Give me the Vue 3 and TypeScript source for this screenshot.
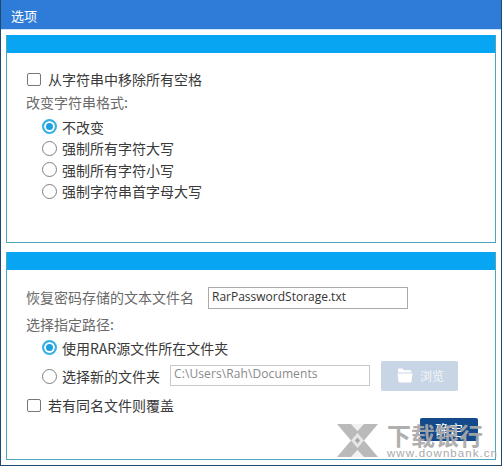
<script setup lang="ts">
const caseOptions: { label: string; on: boolean }[] = [
  { label: '不改变', on: true },
  { label: '强制所有字符大写', on: false },
  { label: '强制所有字符小写', on: false },
  { label: '强制字符串首字母大写', on: false },
]
</script>

<template>
  <div class="win">
    <div class="title">选项</div>
    <div class="body">
      <section class="panel one">
        <div class="bar"></div>
        <div class="content first">
          <div class="row check-row"><span class="check"></span><span class="txt">从字符串中移除所有空格</span></div>
          <div class="label fmt">改变字符串格式:</div>
          <div class="radios">
            <div v-for="o in caseOptions" :key="o.label" class="row radio-row">
              <span class="radio" :class="{ on: o.on }"></span><span class="txt">{{ o.label }}</span>
            </div>
          </div>
        </div>
      </section>
      <section class="panel two">
        <div class="bar"></div>
        <div class="content second">
          <div class="row file-row">
            <span class="label name">恢复密码存储的文本文件名</span>
            <div class="input file">RarPasswordStorage.txt</div>
          </div>
          <div class="label path">选择指定路径:</div>
          <div class="radios r2">
            <div class="row radio-row src"><span class="radio on"></span><span class="txt">使用RAR源文件所在文件夹</span></div>
            <div class="row radio-row new">
              <span class="radio low"></span><span class="txt newtxt">选择新的文件夹</span>
              <div class="input dir">C:\Users\Rah\Documents</div>
              <div class="browse">
                <svg width="16" height="15" viewBox="0 0 16 15"><path d="M1 1.500C1 .8 1.500.5 2 .5h3.500L7 2.200h6.500c.6 0 1 .4 1 1V4.500H1z" fill="#fff"/><path d="M.5 5.500h15l-1 8c-.1.6-.5 1-1.100 1H2.600c-.6 0-1-.4-1.100-1z" fill="#fff"/></svg>
                <span>浏览</span>
              </div>
            </div>
          </div>
          <div class="row check-row over"><span class="check"></span><span class="txt">若有同名文件则覆盖</span></div>
          <div class="actions"><div class="ok">确定</div></div>
        </div>
      </section>
    </div>
    <div class="mark">
      <svg width="41" height="33" viewBox="0 0 41 33">
        <path d="M0 0h41L27 16.500 41 33H0l14-16.500z" fill="#bababa"/>
        <path d="M14 0h13L20.500 7z M14 33h13L20.500 26z" fill="#f2f2f2"/>
        <path d="M20.500 9l6.500 7.500-6.500 7.500-6.500-7.500z" fill="#e6e6e6"/>
        <path d="M20.500 13.500l2.600 3-2.600 3-2.600-3z" fill="#a8a8a8"/>
      </svg>
      <div class="mark-text">
        <div class="mark-cn">下载银行</div>
        <div class="mark-url">www.downbank.cn</div>
      </div>
    </div>
  </div>
</template>

<style>
html, body { margin: 0; padding: 0; background: #fff; }
</style>

<style scoped>
.win {
  position: relative;
  width: 502px;
  height: 466px;
  box-sizing: border-box;
  border: 1px solid #1d4a6e;
  border-top: 0;
  background: #fff;
  overflow: hidden;
  font-family: "Noto Sans CJK SC", "Noto Sans", sans-serif;
  font-size: 14px;
  color: #3a3a3a;
}
.title {
  height: 29px;
  line-height: 31px;
  padding-left: 10px;
  background: #2f7cd8;
  color: #fff;
  font-size: 13px;
  border-bottom: 1px solid #cfe4f7;
}
.body {
  display: flex;
  flex-direction: column;
  gap: 9px;
  padding: 5px 5px 0;
}
.panel {
  box-sizing: border-box;
  height: 208px;
  border: 1px solid #4ea6bb;
  border-top: 0;
  background: #fff;
}
.bar { height: 18px; background: #08a5f3; }
.row { display: flex; align-items: center; }
.content { box-sizing: border-box; }
.first { padding: 16px 0 0 19px; }
.second { padding: 17px 0 0 19px; position: relative; height: 189px; }
.check {
  box-sizing: border-box;
  width: 14px;
  height: 13px;
  margin: 0 7px 0 1px;
  border: 1.5px solid #777;
  border-radius: 2px;
  background: #fff;
  flex: none;
}
.check-row { height: 20px; }
.txt { line-height: 20px; white-space: nowrap; }
.label { color: #6a6a6a; line-height: 20px; white-space: nowrap; }
.fmt { margin-top: 3px; }
.radios { padding: 4px 0 0 16px; }
.radio-row { height: 21.500px; }
.radio {
  box-sizing: border-box;
  width: 15px;
  height: 15px;
  margin-right: 5px;
  border: 1.5px solid #808080;
  border-radius: 50%;
  background: #fff;
  flex: none;
}
.radio.on {
  border: 2px solid #37b0e6;
  background: #1e9fe0;
  box-shadow: inset 0 0 0 2px #fff;
}
.radio.low { margin-top: 2px; }
.file-row { height: 22px; }
.name { width: 182px; margin-bottom: 3px; }
.input {
  box-sizing: border-box;
  height: 22px;
  line-height: 18px;
  padding-left: 3px;
  background: #fff;
  white-space: nowrap;
  font-family: "Open Sans", "Noto Sans", sans-serif;
  font-size: 12px;
}
.file { width: 200px; border: 1px solid #aaa; color: #333; }
.path { margin-top: 5px; }
.r2 { padding-top: 1px; }
.src { height: 25px; }
.new { height: 31px; }
.newtxt { width: 108px; }
.dir {
  width: 200px;
  height: 21px;
  line-height: 16px;
  border: 1px solid #c8c8c8;
  color: #8a8a8a;
  letter-spacing: .1px;
}
.browse {
  box-sizing: border-box;
  width: 77px;
  height: 30px;
  margin-left: 11px;
  display: flex;
  align-items: center;
  padding-left: 16px;
  gap: 7px;
  background: #c8d5e5;
  border-radius: 2px;
  color: #f2f5f9;
  font-size: 12px;
}
.over { margin-top: 4px; }
.actions { position: absolute; right: 17px; bottom: 18px; }
.ok {
  width: 58px;
  height: 23px;
  line-height: 23px;
  text-align: center;
  background: #124a8c;
  color: #fff;
  font-size: 14px;
  border-radius: 2px;
}
.mark {
  position: absolute;
  left: 336px;
  top: 424px;
  display: flex;
  gap: 9px;
  align-items: flex-start;
  pointer-events: none;
}
.mark-text { color: #a9a9a9; }
.mark-cn {
  font-size: 24px;
  line-height: 24px;
  font-weight: 700;
  white-space: nowrap;
  margin-top: -1.500px;
  opacity: .92;
}
.mark-url {
  font-family: "Liberation Sans", sans-serif;
  font-size: 11.500px;
  line-height: 12px;
  letter-spacing: 1.050px;
  white-space: nowrap;
}
</style>
